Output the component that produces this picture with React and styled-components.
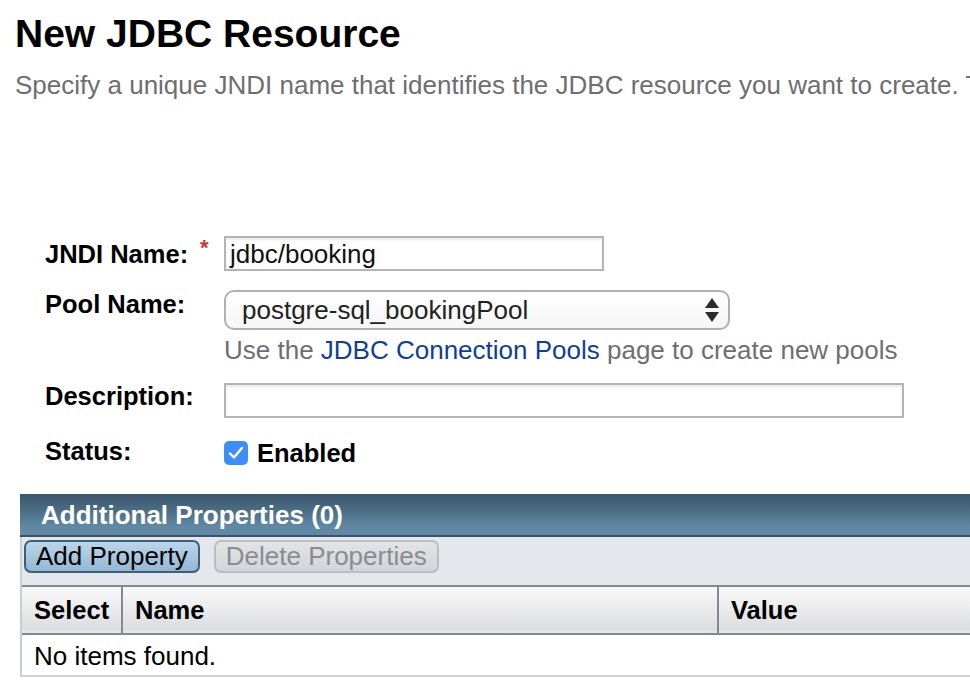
import React from 'react';
import styled, { createGlobalStyle } from 'styled-components';

const GlobalStyle = createGlobalStyle`
  html, body {
    margin: 0;
    padding: 0;
    background: #fff;
    overflow: hidden;
  }
  body {
    font-family: "Liberation Sans", Arial, sans-serif;
    color: #000;
  }
`

const Page = styled.div`
  width: 1010px;
  padding-top: 12px;
`

const Title = styled.h1`
  margin: 0 0 0 15px;
  font-size: 39px;
  line-height: 44px;
  font-weight: bold;
  color: #000;
`

const Intro = styled.p`
  margin: 14px 0 0 15px;
  font-size: 26px;
  line-height: 30px;
  color: #6e6e72;
  white-space: nowrap;
`

const Form = styled.div`
  margin: 136px 0 0 45px;
`

const Field = styled.div`
  display: flex;
  align-items: flex-start;
  margin-top: ${p => p.$top || 0}px;
`

const Label = styled.div`
  position: relative;
  width: 179px;
  flex: none;
  font-size: 25.5px;
  line-height: 30px;
  font-weight: bold;
  margin-top: ${p => p.$shift || 0}px;
`

const Required = styled.span`
  position: absolute;
  left: 155px;
  top: -6px;
  color: #c43a3a;
  font-size: 22px;
  font-weight: bold;
`

const Control = styled.div`
  display: flex;
  flex-direction: column;
`

const TextBox = styled.div`
  box-sizing: border-box;
  width: ${p => p.$width}px;
  height: 35px;
  border: 2px solid #b4b4b4;
  box-shadow: inset 0 2px 2px rgba(0,0,0,0.08);
  padding: 0 4px;
  font-size: 26px;
  line-height: 33px;
  color: #111;
`

const SelectBox = styled.div`
  box-sizing: border-box;
  width: 506px;
  height: 40px;
  border: 2px solid #b0b0b0;
  border-radius: 10px;
  background: linear-gradient(#ffffff, #f6f6f6);
  display: flex;
  align-items: center;
  justify-content: space-between;
  padding: 0 8px 0 16px;
  font-size: 26px;
  color: #222;
`

const Help = styled.div`
  margin-top: 5px;
  font-size: 26px;
  line-height: 30px;
  color: #6e6e72;
  white-space: nowrap;
`

const Link = styled.a`
  color: #0f3f94;
  text-decoration: none;
`

const CheckRow = styled.div`
  display: flex;
  align-items: center;
  gap: 9px;
  margin-top: 5px;
  font-size: 25.5px;
  font-weight: bold;
  line-height: 24px;
`

const CheckBox = styled.span`
  width: 24px;
  height: 24px;
  border-radius: 5px;
  background: #3e8ef7;
  display: flex;
  align-items: center;
  justify-content: center;
`

const Table = styled.div`
  margin: 28px 0 0 20px;
  width: 990px;
  border-left: 2px solid #c9ced3;
`

const TableTitle = styled.div`
  height: 41px;
  background: linear-gradient(#3b566b 0%, #4e7088 45%, #6189a5 80%, #6189a5 100%);
  border-bottom: 2px solid #3a5265;
  color: #fff;
  font-size: 26px;
  font-weight: bold;
  line-height: 43px;
  padding-left: 21px;
  margin-left: -2px;
`

const Actions = styled.div`
  height: 48px;
  background: #e4e7ec;
  display: flex;
  align-items: flex-start;
  gap: 14px;
  padding: 3px 0 0 2px;
  box-sizing: border-box;
`

const Button = styled.button`
  height: 33px;
  padding: 0 10px;
  border-radius: 7px;
  font-family: "Liberation Sans", Arial, sans-serif;
  font-size: 26px;
  line-height: 29px;
  border: 2px solid ${p => (p.disabled ? '#babdc1' : '#3f5f79')};
  color: ${p => (p.disabled ? '#898c90' : '#000')};
  background: ${p => (p.disabled
    ? 'linear-gradient(#e2e4e7, #d2d5d9)'
    : 'linear-gradient(#bcd6ea, #93b8d4)')};
`

const HeadRow = styled.div`
  display: flex;
  height: 46px;
  border-top: 2px solid #7e8b93;
  border-bottom: 2px solid #7e8b93;
  background: linear-gradient(#f8f8f8 0%, #eeeeef 40%, #dcdde0 90%, #e6e7e9 100%);
`

const HeadCell = styled.div`
  width: ${p => p.$width}px;
  flex: ${p => (p.$width ? 'none' : 1)};
  box-sizing: border-box;
  padding-left: 12px;
  font-size: 25.5px;
  font-weight: bold;
  line-height: 46px;
  & + & {
    border-left: 2px solid #7e8b93;
  }
`

const EmptyRow = styled.div`
  height: 40px;
  border-bottom: 2px solid #cdd1d5;
  padding-left: 12px;
  font-size: 26px;
  line-height: 42px;
`

const Arrows = () => (
  <svg width="16" height="26" viewBox="0 0 16 26">
    <path d="M8 1 L15 11 L1 11 Z" fill="#2b2b2b" />
    <path d="M1 15 L15 15 L8 25 Z" fill="#2b2b2b" />
  </svg>
)

const Check = () => (
  <svg width="16" height="14" viewBox="0 0 16 14">
    <path d="M2 7.5 L6 11.5 L14 2" fill="none" stroke="#fff" strokeWidth="2.4" strokeLinecap="round" strokeLinejoin="round" />
  </svg>
)

export default function App() {
  return (
    <Page>
      <GlobalStyle />
      <Title>New JDBC Resource</Title>
      <Intro>Specify a unique JNDI name that identifies the JDBC resource you want to create. The name must contain only alphanumeric characters.</Intro>

      <Form>
        <Field>
          <Label $shift={3}>JNDI Name:<Required>*</Required></Label>
          <TextBox $width={380}>jdbc/booking</TextBox>
        </Field>
        <Field $top={19}>
          <Label $shift={-1}>Pool Name:</Label>
          <Control>
            <SelectBox>
              <span>postgre-sql_bookingPool</span>
              <Arrows />
            </SelectBox>
            <Help>
              Use the <Link href="#">JDBC Connection Pools</Link> page to create new pools
            </Help>
          </Control>
        </Field>
        <Field $top={18}>
          <Label $shift={-2}>Description:</Label>
          <TextBox $width={680} />
        </Field>
        <Field $top={18}>
          <Label>Status:</Label>
          <CheckRow>
            <CheckBox><Check /></CheckBox>
            Enabled
          </CheckRow>
        </Field>
      </Form>

      <Table>
        <TableTitle>Additional Properties (0)</TableTitle>
        <Actions>
          <Button>Add Property</Button>
          <Button disabled>Delete Properties</Button>
        </Actions>
        <HeadRow>
          <HeadCell $width={99}>Select</HeadCell>
          <HeadCell $width={596}>Name</HeadCell>
          <HeadCell>Value</HeadCell>
        </HeadRow>
        <EmptyRow>No items found.</EmptyRow>
      </Table>
    </Page>
  );
}
